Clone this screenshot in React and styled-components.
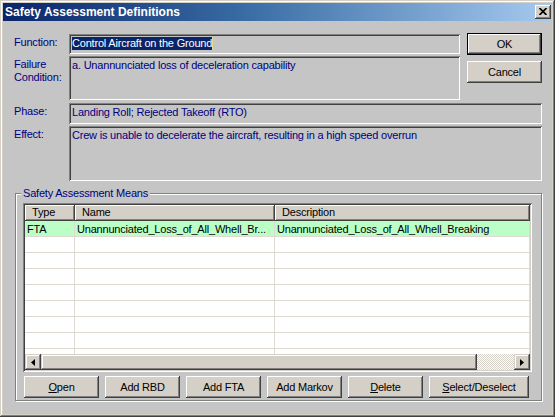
import React from 'react';
import styled, { createGlobalStyle } from 'styled-components';

const GlobalStyle = createGlobalStyle`
  html, body { margin: 0; padding: 0; background: #d4d0c8; }
  body { font-family: "Liberation Sans", Arial, sans-serif; font-size: 11px; }
  * { box-sizing: border-box; }
`;

const FACE = '#d4d0c8';
const BODY = '#c5c5c5';
const NAVY = '#000080';

const Window = styled.div`
  width: 555px;
  height: 417px;
  display: flex;
  flex-direction: column;
  background: ${FACE};
  padding: 3px;
  box-shadow: inset -1px -1px #404040, inset 1px 1px ${FACE}, inset -2px -2px #808080, inset 2px 2px #fff;
`;

const TitleBar = styled.div`
  height: 18px;
  flex: none;
  display: flex;
  align-items: center;
  padding: 0 1px 0 2px;
  background: linear-gradient(90deg, #0a246a 0%, #3a6ea5 45%, #a6caf0 100%);
`;

const TitleText = styled.span`
  font: bold 12px "Liberation Sans", Arial, sans-serif;
  color: #fff;
  white-space: nowrap;
`;

const CloseButton = styled.div`
  margin-left: auto;
  width: 16px;
  height: 14px;
  display: flex;
  align-items: center;
  justify-content: center;
  background: ${FACE};
  box-shadow: inset -1px -1px #404040, inset 1px 1px #fff, inset -2px -2px #808080, inset 2px 2px ${FACE};
  padding-bottom: 1px;
`;

const Body = styled.div`
  flex: 1;
  display: flex;
  flex-direction: column;
  background: ${BODY};
  padding: 13px 10px 0 11px;
  letter-spacing: -0.2px;
`;

const Form = styled.div`
  display: grid;
  grid-template-columns: 55px 391px 82px;
  grid-template-rows: 20px 45px 21px 55px;
  row-gap: 2px;
`;

const Label = styled.div`
  color: ${NAVY};
  line-height: 13px;
  padding-top: 2px;
  grid-column: 1;
`;

const Field = styled.div`
  grid-column: ${p => (p.$wide ? '2 / span 2' : '2')};
  height: ${p => p.$h}px;
  align-self: start;
  color: ${NAVY};
  line-height: 13px;
  padding: 3px 3px 0 3px;
  background: ${BODY};
  white-space: nowrap;
  overflow: hidden;
  box-shadow: inset 1px 1px #808080, inset -1px -1px #fff, inset 2px 2px #404040, inset -2px -2px ${BODY};
`;

const Selected = styled.span`
  background: #0a246a;
  color: #fff;
  display: inline-block;
  line-height: 13px;
`;

const Caret = styled.span`
  display: inline-block;
  width: 1px;
  height: 13px;
  vertical-align: top;
  background: #e8dc8c;
`;

const ButtonColumn = styled.div`
  grid-column: 3;
  grid-row: 1 / span 2;
  display: flex;
  flex-direction: column;
  gap: 6px;
  padding-left: 7px;
  margin-top: -1px;
`;

const Button = styled.button`
  width: ${p => p.$w || 75}px;
  height: 22px;
  flex: none;
  padding: 0;
  border: none;
  background: ${FACE};
  color: #000;
  font: 11px "Liberation Sans", Arial, sans-serif;
  letter-spacing: -0.2px;
  text-align: center;
  box-shadow: ${p =>
    p.$default
      ? `inset 0 0 0 1px #000, inset -2px -2px #404040, inset 2px 2px #fff, inset -3px -3px #808080`
      : `inset -1px -1px #404040, inset 1px 1px #fff, inset -2px -2px #808080, inset 2px 2px ${FACE}`};
  u { text-decoration: underline; text-underline-offset: 1px; }
`;

const Group = styled.fieldset`
  margin: 6px 0 0 1px;
  padding: 3px 9px 2px 7px;
  border: 1px solid #808080;
  box-shadow: inset 1px 1px #fff, 1px 1px #fff;
  min-width: 0;
`;

const Legend = styled.legend`
  color: ${NAVY};
  line-height: 13px;
  padding: 0 2px;
  margin-left: -2px;
  background: ${BODY};
`;

const ListView = styled.div`
  height: 169px;
  display: flex;
  flex-direction: column;
  background: #fff;
  padding: 2px;
  box-shadow: inset 1px 1px #808080, inset -1px -1px #fff, inset 2px 2px #404040, inset -2px -2px ${FACE};
`;

const COLS = '50px 200px 255px';

const Header = styled.div`
  display: grid;
  grid-template-columns: ${COLS};
  height: 16px;
  flex: none;
`;

const HeaderCell = styled.div`
  background: ${FACE};
  color: #000;
  line-height: 15px;
  padding-left: 7px;
  white-space: nowrap;
  overflow: hidden;
  box-shadow: inset -1px -1px #404040, inset 1px 1px #fff, inset -2px -2px #808080;
`;

const Rows = styled.div`
  flex: 1;
  overflow: hidden;
`;

const Row = styled.div`
  display: grid;
  grid-template-columns: ${COLS};
  height: 16px;
  border-bottom: 1px solid #dedad2;
  background: ${p => (p.$selected ? '#bcffc6' : '#fff')};
`;

const Cell = styled.div`
  color: #000;
  padding: 2px 0 0 2px;
  line-height: 13px;
  white-space: nowrap;
  overflow: hidden;
  border-right: 1px solid #dedad2;
`;

const HScroll = styled.div`
  display: flex;
  height: 16px;
  flex: none;
`;

const raised = `inset -1px -1px #404040, inset 1px 1px ${FACE}, inset -2px -2px #808080, inset 2px 2px #fff`;

const ScrollButton = styled.div`
  width: 16px;
  height: 16px;
  flex: none;
  display: flex;
  align-items: center;
  justify-content: center;
  background: ${FACE};
  box-shadow: ${raised};
`;

const Thumb = styled.div`
  width: 436px;
  flex: none;
  background: ${FACE};
  box-shadow: ${raised};
`;

const Track = styled.div`
  flex: 1;
  background-color: #fff;
  background-image: repeating-conic-gradient(${FACE} 0 25%, #fff 0 50%);
  background-size: 2px 2px;
`;

const ButtonRow = styled.div`
  display: flex;
  gap: 6px;
  margin: 4px 0 0 1px;
`;

const Arrow = ({ dir }) => (
  <svg width="4" height="7" viewBox="0 0 4 7">
    <polygon points={dir === 'left' ? '4,0 0,3.5 4,7' : '0,0 4,3.5 0,7'} fill="#000" />
  </svg>
);

const rows = [
  { type: 'FTA', name: 'Unannunciated_Loss_of_All_Whell_Br...', desc: 'Unannunciated_Loss_of_All_Whell_Breaking', selected: true },
  {}, {}, {}, {}, {}, {}, {}, {},
];

export default function App() {
  return (
    <>
      <GlobalStyle />
      <Window>
        <TitleBar>
          <TitleText>Safety Assessment Definitions</TitleText>
          <CloseButton>
            <svg width="8" height="7" viewBox="0 0 8 7">
              <path d="M0.5,0 L7.5,7 M7.5,0 L0.5,7" stroke="#000" strokeWidth="1.7" />
            </svg>
          </CloseButton>
        </TitleBar>
        <Body>
          <Form>
            <Label>Function:</Label>
            <Field $h={20}>
              <Selected>Control Aircraft on the Ground</Selected>
              <Caret />
            </Field>
            <ButtonColumn>
              <Button $default>OK</Button>
              <Button>Cancel</Button>
            </ButtonColumn>
            <Label>Failure<br />Condition:</Label>
            <Field $h={44}>a. Unannunciated loss of deceleration capability</Field>
            <Label>Phase:</Label>
            <Field $h={21} $wide>Landing Roll; Rejected Takeoff (RTO)</Field>
            <Label>Effect:</Label>
            <Field $h={55} $wide>Crew is unable to decelerate the aircraft, resulting in a high speed overrun</Field>
          </Form>
          <Group>
            <Legend>Safety Assessment Means</Legend>
            <ListView>
              <Header>
                <HeaderCell>Type</HeaderCell>
                <HeaderCell>Name</HeaderCell>
                <HeaderCell>Description</HeaderCell>
              </Header>
              <Rows>
                {rows.map((r, i) => (
                  <Row key={i} $selected={r.selected}>
                    <Cell>{r.type}</Cell>
                    <Cell>{r.name}</Cell>
                    <Cell>{r.desc}</Cell>
                  </Row>
                ))}
              </Rows>
              <HScroll>
                <ScrollButton><Arrow dir="left" /></ScrollButton>
                <Thumb />
                <Track />
                <ScrollButton><Arrow dir="right" /></ScrollButton>
              </HScroll>
            </ListView>
            <ButtonRow>
              <Button><u>O</u>pen</Button>
              <Button>Add RBD</Button>
              <Button>Add FTA</Button>
              <Button>Add Markov</Button>
              <Button><u>D</u>elete</Button>
              <Button $w={100}><u>S</u>elect/Deselect</Button>
            </ButtonRow>
          </Group>
        </Body>
      </Window>
    </>
  );
}
